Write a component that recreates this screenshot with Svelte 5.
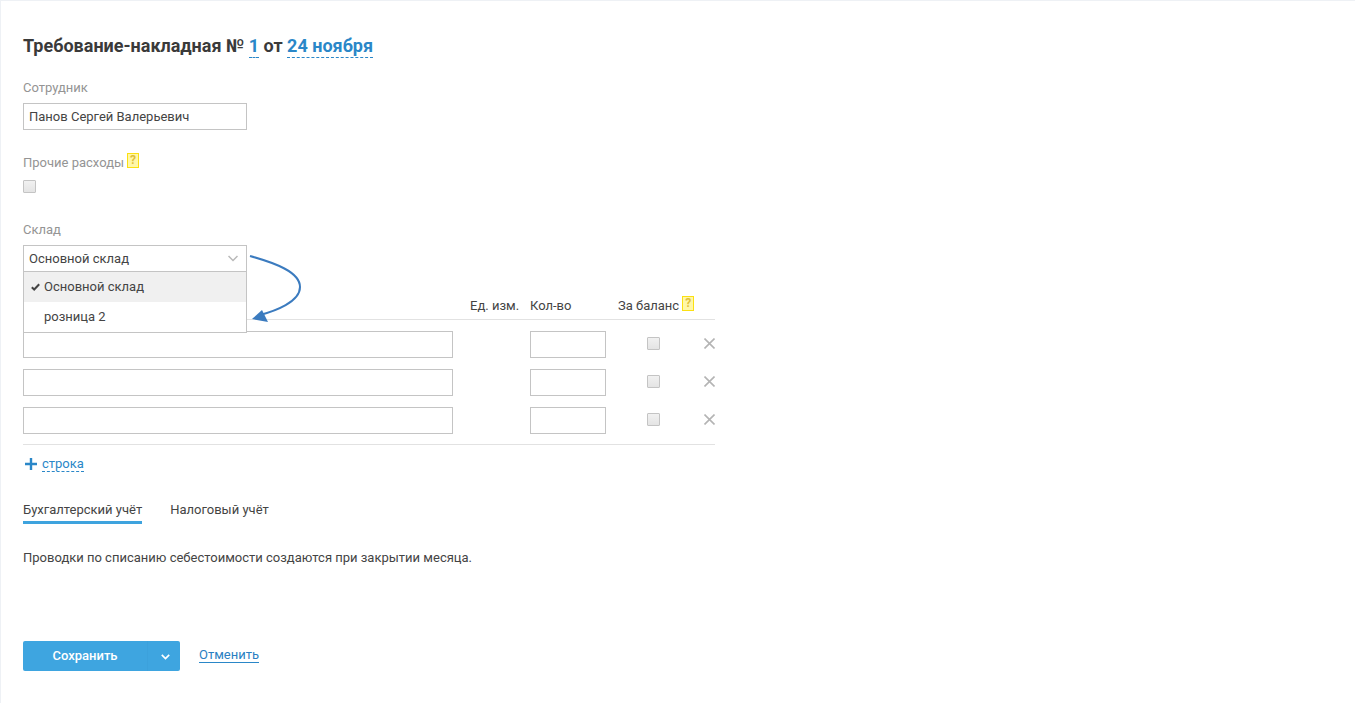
<script>
  const rows = [1, 2, 3];
</script>

<div class="page">
  <h1 class="title">Требование-накладная № <span class="dash">1</span> от <span class="dash">24 ноября</span></h1>

  <div class="label first">Сотрудник</div>
  <div class="input wide">Панов Сергей Валерьевич</div>

  <div class="label other">Прочие расходы <span class="hint">?</span></div>
  <div class="check"></div>

  <div class="label store">Склад</div>
  <div class="selectwrap">
    <div class="input select">
      Основной склад
      <svg class="chev" width="10" height="7" viewBox="0 0 10 7"><path d="M0.500 1l4.500 4.500L9.500 1" fill="none" stroke="#b9b9b9" stroke-width="1.500"/></svg>
    </div>
    <div class="menu">
      <div class="opt active">
        <svg class="tick" width="9" height="8" viewBox="0 0 9 8"><path d="M0.800 4.200L3.200 6.500L8.200 1.200" fill="none" stroke="#444" stroke-width="2"/></svg>
        Основной склад
      </div>
      <div class="opt">розница 2</div>
    </div>
    <svg class="arrow" width="60" height="76" viewBox="0 0 60 76">
      <path d="M5 2C30 9 55 18 55 33C55 48 30 57 15 61" fill="none" stroke="#3b7bbf" stroke-width="2"/>
      <path d="M7 65L17 56L23 68Z" fill="#3b7bbf"/>
    </svg>
  </div>

  <div class="table">
    <div class="thead">
      <div class="c-name"></div>
      <div class="c-unit">Ед. изм.</div>
      <div class="c-qty">Кол-во</div>
      <div class="c-bal">За баланс <span class="hint">?</span></div>
    </div>
    <div class="tbody">
      {#each rows as r}
        <div class="row">
          <div class="input name"></div>
          <div class="input qty"></div>
          <div class="check rowcheck"></div>
          <svg class="x" width="11" height="11" viewBox="0 0 11 11"><path d="M0.500 0.500l10 10M10.500 0.500l-10 10" stroke="#b4b4b4" stroke-width="1.600"/></svg>
        </div>
      {/each}
    </div>
  </div>

  <div class="add">
    <svg width="14" height="14" viewBox="0 0 14 14"><path d="M7 1v12M1 7h12" stroke="#2a87c8" stroke-width="2.400"/></svg>
    <span class="addlink">строка</span>
  </div>

  <div class="tabs">
    <div class="tab on">Бухгалтерский учёт</div>
    <div class="tab">Налоговый учёт</div>
  </div>

  <p class="note">Проводки по списанию себестоимости создаются при закрытии месяца.</p>

  <div class="actions">
    <div class="btn">
      <span class="btn-main">Сохранить</span>
      <span class="btn-side">
        <svg width="9" height="6" viewBox="0 0 9 6"><path d="M0.800 0.800l3.700 3.700 3.700-3.700" fill="none" stroke="#fff" stroke-width="1.700"/></svg>
      </span>
    </div>
    <span class="cancel">Отменить</span>
  </div>
</div>

<style>
  :global(body) {
    margin: 0;
    background: #fff;
  }
  .page {
    box-sizing: border-box;
    height: 703px;
    overflow: hidden;
    padding: 34px 23px 0 22px;
    border-top: 1px solid #eef1f5;
    border-left: 1px solid #eef1f5;
    font: 13px/16px Roboto, sans-serif;
    color: #444;
  }
  .title {
    margin: 0;
    font: 700 18px/22px Roboto, sans-serif;
    color: #3a3a3a;
  }
  .dash {
    color: #2a87c8;
    border-bottom: 1px dashed #2a87c8;
    padding-bottom: 1px;
  }
  .label {
    color: #949494;
  }
  .first {
    margin-top: 23px;
  }
  .other {
    margin-top: 25px;
    display: flex;
    align-items: flex-start;
    gap: 3px;
  }
  .store {
    margin-top: 29px;
  }
  .hint {
    box-sizing: border-box;
    display: inline-block;
    width: 12px;
    height: 15px;
    margin-top: -2px;
    background: #fff7a8;
    border: 1px solid #fbe012;
    color: #dfbf3c;
    font: 700 12px/13px Roboto, sans-serif;
    text-align: center;
  }
  .input {
    box-sizing: border-box;
    height: 27px;
    border: 1px solid #c4c4c4;
    background: #fff;
    line-height: 26px;
    padding: 0 5px;
    color: #444;
  }
  .wide {
    width: 224px;
    margin-top: 7px;
  }
  .check {
    box-sizing: border-box;
    width: 13px;
    height: 13px;
    margin-top: 9px;
    border: 1px solid #c4c4c4;
    border-radius: 1px;
    background: linear-gradient(#f1f1f1, #e4e4e4);
    flex-shrink: 0;
  }
  .selectwrap {
    position: relative;
    height: 27px;
    width: 224px;
    margin-top: 7px;
  }
  .select {
    display: flex;
    align-items: center;
    justify-content: space-between;
    padding-right: 8px;
  }
  .menu {
    position: absolute;
    z-index: 2;
    top: 27px;
    left: 0;
    box-sizing: border-box;
    width: 224px;
    height: 61px;
    background: #fff;
    border: 1px solid #c4c4c4;
    border-top: none;
  }
  .opt {
    position: relative;
    height: 30px;
    line-height: 29px;
    padding-left: 20px;
  }
  .opt.active {
    background: #f0f0f0;
  }
  .tick {
    position: absolute;
    left: 7px;
    top: 11px;
  }
  .arrow {
    position: absolute;
    z-index: 3;
    left: 222px;
    top: 9px;
  }
  .table {
    width: 692px;
    padding-top: 23px;
    border-bottom: 1px solid #e2e2e2;
  }
  .thead {
    display: flex;
    height: 25px;
    align-items: flex-start;
    border-bottom: 1px solid #e2e2e2;
    line-height: 16px;
    color: #444;
    padding-top: 3px;
    box-sizing: border-box;
  }
  .c-name {
    width: 447px;
  }
  .c-unit {
    width: 60px;
  }
  .c-qty {
    width: 88px;
  }
  .c-bal {
    display: flex;
    gap: 3px;
  }
  .tbody {
    padding: 11px 0 10px;
    display: flex;
    flex-direction: column;
    gap: 11px;
  }
  .row {
    display: flex;
    align-items: center;
  }
  .name {
    width: 430px;
    flex-shrink: 0;
  }
  .qty {
    width: 76px;
    margin-left: 77px;
    flex-shrink: 0;
  }
  .rowcheck {
    margin: 0 0 2px 41px;
  }
  .x {
    margin: 0 0 2px 44px;
    flex-shrink: 0;
  }
  .add {
    display: flex;
    align-items: center;
    gap: 4px;
    margin-top: 11px;
    margin-left: 1px;
    color: #2a87c8;
    height: 16px;
  }
  .addlink {
    border-bottom: 1px dashed #2a87c8;
    line-height: 14px;
    margin-top: 1px;
  }
  .tabs {
    display: flex;
    gap: 28px;
    margin-top: 30px;
  }
  .tab {
    padding-bottom: 3px;
    border-bottom: 3px solid transparent;
    color: #444;
    line-height: 16px;
  }
  .tab.on {
    border-bottom-color: #3ea3de;
  }
  .note {
    margin: 26px 0 0;
  }
  .actions {
    display: flex;
    align-items: center;
    margin-top: 75px;
  }
  .btn {
    display: flex;
    width: 157px;
    height: 30px;
    border-radius: 2px;
    background: #3ea5e0;
    color: #fff;
    font-weight: 500;
    line-height: 30px;
  }
  .btn-main {
    width: 124px;
    text-align: center;
  }
  .btn-side {
    flex: 1;
    display: flex;
    align-items: center;
    justify-content: center;
    border-left: 1px solid #3ca1dc;
    padding: 1px 0 0 2px;
  }
  .cancel {
    margin: 0 0 2px 19px;
    color: #2a7fc2;
    border-bottom: 1px solid #2a87c8;
    line-height: 14px;
  }
</style>
